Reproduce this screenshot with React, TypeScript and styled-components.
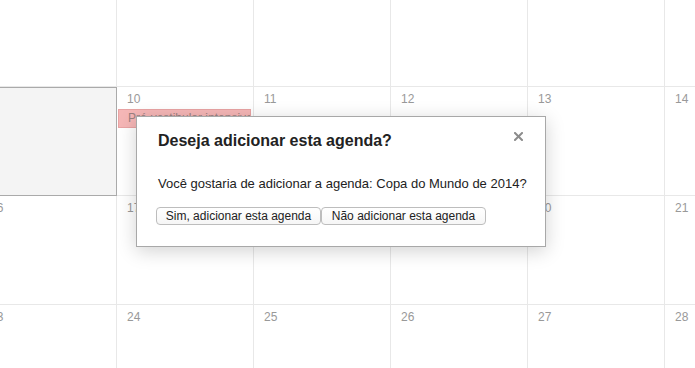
import { createGlobalStyle, styled } from "styled-components"

const GlobalStyle = createGlobalStyle`
  html, body {
    margin: 0;
    padding: 0;
    background: #fff;
    font-family: "Liberation Sans", Arial, sans-serif;
    overflow: hidden;
  }
`;

const Page = styled.div`
  position: relative;
  width: 695px;
  height: 368px;
  overflow: hidden;
`;

const Grid = styled.div`
  display: grid;
  grid-template-columns: repeat(6, 137px);
  grid-auto-rows: 109px;
  margin: -22px 0 0 -20px;
`;

const Cell = styled.div<{ $selected?: boolean }>`
  position: relative;
  border-right: 1px solid ${(p) => (p.$selected ? "#aaaaaa" : "#e8e8e8")};
  border-bottom: 1px solid ${(p) => (p.$selected ? "#aaaaaa" : "#e8e8e8")};
  background: ${(p) => (p.$selected ? "#f4f4f4" : "#fff")};
  box-shadow: ${(p) => (p.$selected ? "inset 0 1px 0 #aaaaaa" : "none")};
  display: flex;
  flex-direction: column;
`;

const DayNumber = styled.span`
  font-size: 12px;
  line-height: 14px;
  color: #999;
  padding: 5px 0 0 10px;
`;

const Event = styled.div`
  margin: 3px 2px 0 1px;
  height: 17px;
  background: #f5b6b6;
  border: 1px solid #e8a3a3;
  font-size: 12px;
  line-height: 17px;
  color: #9a8080;
  padding-left: 9px;
  white-space: nowrap;
  overflow: hidden;
`;

const Dialog = styled.div`
  position: absolute;
  left: 136px;
  top: 116px;
  width: 410px;
  height: 131px;
  background: #fff;
  border: 1px solid #a8a8a8;
  box-shadow: 0 4px 18px rgba(0, 0, 0, 0.18);
  padding: 14px 16px 0 21px;
  box-sizing: border-box;
  color: #222;
`;

const Title = styled.h2`
  margin: 0;
  font-size: 16px;
  line-height: 20px;
  font-weight: bold;
  color: #222;
`;

const Close = styled.span`
  position: absolute;
  right: 22px;
  top: 15px;
  width: 9px;
  height: 9px;
  display: flex;
  cursor: pointer;
`;

const Message = styled.p`
  margin: 25px 0 0;
  font-size: 13px;
  line-height: 16px;
  white-space: nowrap;
`;

const Actions = styled.div`
  display: flex;
  margin: 15px 0 0 -2px;
`;

const Button = styled.button`
  height: 18px;
  width: 165px;
  padding: 0;
  font-family: "Liberation Sans", Arial, sans-serif;
  font-size: 12px;
  line-height: 16px;
  color: #222;
  background: linear-gradient(#fff, #f6f6f6);
  border: 1px solid #bdbdbd;
  border-radius: 4px;
  cursor: pointer;
`;

const rows: { day: string; events?: string[] }[][] = [
  [{ day: "2" }, { day: "3" }, { day: "4" }, { day: "5" }, { day: "6" }, { day: "7" }],
  [
    { day: "" },
    { day: "10", events: ["Pré-vestibular intensivo"] },
    { day: "11" },
    { day: "12" },
    { day: "13" },
    { day: "14" },
  ],
  [{ day: "16" }, { day: "17" }, { day: "18" }, { day: "19" }, { day: "20" }, { day: "21" }],
  [{ day: "23" }, { day: "24" }, { day: "25" }, { day: "26" }, { day: "27" }, { day: "28" }],
];

export default function App() {
  return (
    <Page>
      <GlobalStyle />
      <Grid>
        {rows.map((week, r) =>
          week.map((d, c) => (
            <Cell key={`${r}-${c}`} $selected={r === 1 && c === 0}>
              {r > 0 && d.day && <DayNumber>{d.day}</DayNumber>}
              {d.events?.map((e) => (
                <Event key={e}>{e}</Event>
              ))}
            </Cell>
          ))
        )}
      </Grid>

      <Dialog>
        <Title>Deseja adicionar esta agenda?</Title>
        <Close>
          <svg width="9" height="9" viewBox="0 0 9 9">
            <path d="M1 1L8 8M8 1L1 8" stroke="#8c8c8c" strokeWidth="2" strokeLinecap="square" />
          </svg>
        </Close>
        <Message>Você gostaria de adicionar a agenda: Copa do Mundo de 2014?</Message>
        <Actions>
          <Button>Sim, adicionar esta agenda</Button>
          <Button>Não adicionar esta agenda</Button>
        </Actions>
      </Dialog>
    </Page>
  )
}
